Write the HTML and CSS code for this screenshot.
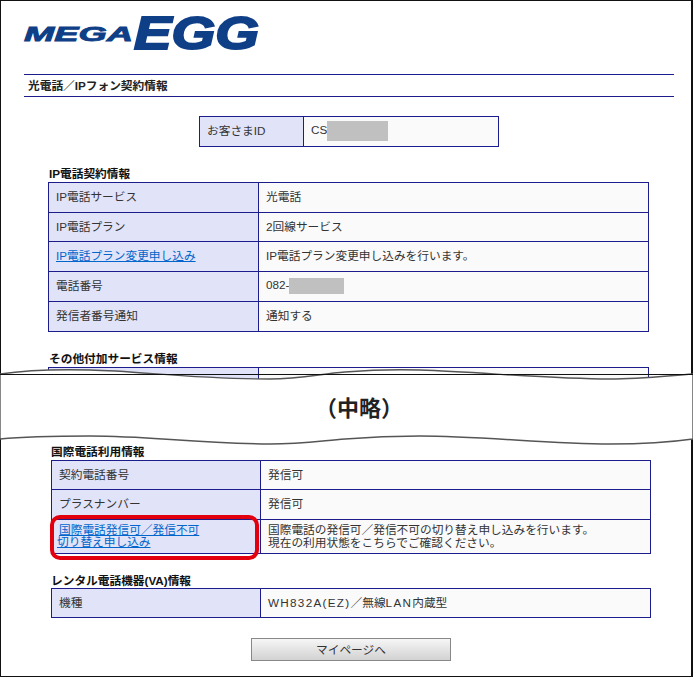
FILE: index.html
```html
<!DOCTYPE html>
<html>

<head>
    <title>光電話/IPフォン契約情報</title>
    <link rel="stylesheet" href="styles.css">
</head>

<body>
    <div id="main">
        <svg class="logo" width="300" height="72" viewBox="0 0 300 72">
            <text class="logo-small" x="24" y="39" textLength="109" lengthAdjust="spacingAndGlyphs">MEGA</text>
            <text class="logo-big" x="134" y="47" textLength="125" lengthAdjust="spacingAndGlyphs">EGG</text>
        </svg>

        <div class="title">光電話／IPフォン契約情報</div>

        <table class="info id-table">
            <tr>
                <td class="head">お客さまID</td>
                <td class="value">CS<span class="mask mask-id"></span></td>
            </tr>
        </table>

        <div class="heading">IP電話契約情報</div>
        <table class="info">
            <tr>
                <td class="head">IP電話サービス</td>
                <td class="value">光電話</td>
            </tr>
            <tr class="short">
                <td class="head">IP電話プラン</td>
                <td class="value">2回線サービス</td>
            </tr>
            <tr>
                <td class="head"><a href="#">IP電話プラン変更申し込み</a></td>
                <td class="value">IP電話プラン変更申し込みを行います。</td>
            </tr>
            <tr>
                <td class="head">電話番号</td>
                <td class="value">082-<span class="mask mask-tel"></span></td>
            </tr>
            <tr>
                <td class="head">発信者番号通知</td>
                <td class="value">通知する</td>
            </tr>
        </table>

        <div class="heading">その他付加サービス情報</div>
        <table class="info cut-table">
            <tr>
                <td class="head"></td>
                <td class="value"></td>
            </tr>
        </table>

        <div class="lower">
            <div class="heading first">国際電話利用情報</div>
            <table class="info wide">
                <tr class="short">
                    <td class="head">契約電話番号</td>
                    <td class="value">発信可</td>
                </tr>
                <tr>
                    <td class="head">プラスナンバー</td>
                    <td class="value">発信可</td>
                </tr>
                <tr class="double">
                    <td class="head marked">
                        <a href="#" class="first-line">国際電話発信可／発信不可</a><br>
                        <a href="#">切り替え申し込み</a>
                        <div class="red-box"></div>
                    </td>
                    <td class="value">国際電話の発信可／発信不可の切り替え申し込みを行います。<br>現在の利用状態をこちらでご確認ください。</td>
                </tr>
            </table>

            <div class="heading rental">レンタル電話機器(VA)情報</div>
            <table class="info wide">
                <tr class="short">
                    <td class="head">機種</td>
                    <td class="value"><span class="latin">WH832A(EZ)</span>／無線<span class="latin">LAN</span>内蔵型</td>
                </tr>
            </table>

            <div class="button-box">
                <div class="button">マイページへ</div>
            </div>
        </div>

        <svg class="cut" width="693" height="90" viewBox="0 0 693 90">
            <path class="cut-fill" d="M0 14 C20 11 50 9 90 10 C140 11 190 19 270 19 C300 19 320 14 345 12 C370 10 390 9 420 10 C480 12 550 19 610 19 C640 19 665 16 693 14 L693 79 C665 83 640 84 610 84 C550 84 480 76 420 76 C390 76 370 77 345 79 C320 81 300 84 270 84 C190 83 150 76 90 76 C50 76 20 77 0 79 Z" />
            <line class="cut-line" x1="0" y1="14.5" x2="693" y2="14.5" />
            <text class="cut-text" x="359" y="56">（中略）</text>
        </svg>
    </div>
</body>

</html>
```

FILE: styles.css
```css
* {
    box-sizing: border-box;
}

html,
body {
    margin: 0;
    height: 100%;
    overflow: hidden;
}

body {
    background-color: white;
    color: #333;
    font-family: "Liberation Sans", "Noto Sans CJK JP", sans-serif;
    font-size: 11.7px;
}

#main {
    position: relative;
    width: 693px;
    height: 677px;
    border: 2px solid #111;
    border-width: 1px 2px 1px 1px;
    background-color: white;
}

.logo {
    display: block;
    height: 73px;
    margin-left: -1px;
}

.logo-small,
.logo-big {
    font-family: "Liberation Sans", sans-serif;
    font-weight: bold;
    font-style: italic;
    fill: #0f3f86;
    stroke: #0f3f86;
}

.logo-small {
    font-size: 19.5px;
    stroke-width: 0.8px;
}

.logo-big {
    font-size: 47px;
    stroke-width: 2px;
}

.title {
    width: 650px;
    height: 23px;
    margin-left: 23px;
    padding-left: 4px;
    border-top: 1px solid #1c1c8c;
    border-bottom: 1px solid #1c1c8c;
    font-weight: bold;
    line-height: 21px;
    color: #222;
}

.heading {
    width: 400px;
    height: 16px;
    margin: 19px 0 0 48px;
    font-weight: bold;
    line-height: 16px;
    color: #111;
}

.info {
    width: 601px;
    margin-left: 47px;
    border-collapse: collapse;
    table-layout: fixed;
}

.info td {
    height: 30px;
    padding: 0 7px 2px;
    border: 1px solid #1c1c8c;
    line-height: 13px;
}

.info .short td {
    height: 29px;
}

.info .double td {
    height: 34px;
    vertical-align: middle;
}

.head {
    width: 210px;
    background-color: #e1e3f8;
}

.value {
    background-color: #fafafa;
}

.info a {
    color: #0066cc;
}

.info .marked {
    position: relative;
    padding-left: 5px;
    line-height: 12px;
}

.first-line {
    margin-left: 2px;
}

.latin {
    letter-spacing: 1.3px;
}

.id-table {
    width: 300px;
    margin: 19px 0 0 198px;
}

.id-table .head {
    width: 104px;
}

.cut-table td {
    height: 14px;
    padding: 0;
}

.mask {
    display: inline-block;
    vertical-align: middle;
    background-color: #c0c0c0;
}

.mask-id {
    width: 61px;
    height: 20px;
}

.mask-tel {
    width: 55px;
    height: 16px;
}

.lower {
    margin-top: 62px;
}

.lower .heading {
    margin: 18px 0 0 50px;
}

.lower .heading.first {
    margin-top: 0;
}

.lower .heading.rental {
    line-height: 18px;
}

.wide {
    width: 600px;
    margin-left: 50px;
}

.wide .head {
    width: 209px;
}

.red-box {
    position: absolute;
    top: -5px;
    left: -2px;
    width: 209px;
    height: 45px;
    border: 4px solid #e2000f;
    border-radius: 10px;
}

.button-box {
    display: flex;
    justify-content: center;
    width: 200px;
    margin: 20px 0 0 250px;
}

.button {
    width: 200px;
    height: 23px;
    border: 1px solid #888;
    background: linear-gradient(#f6f6f6, #d2d2d2);
    text-align: center;
    line-height: 21px;
}

.cut {
    position: absolute;
    top: 359px;
    left: -1px;
}

.cut-fill {
    fill: white;
    stroke: #555;
    stroke-width: 1.4px;
}

.cut-line {
    stroke: #111;
    stroke-width: 1px;
}

.cut-text {
    font-family: "Noto Sans CJK JP", sans-serif;
    font-size: 22px;
    font-weight: bold;
    fill: #222;
    text-anchor: middle;
}
```
